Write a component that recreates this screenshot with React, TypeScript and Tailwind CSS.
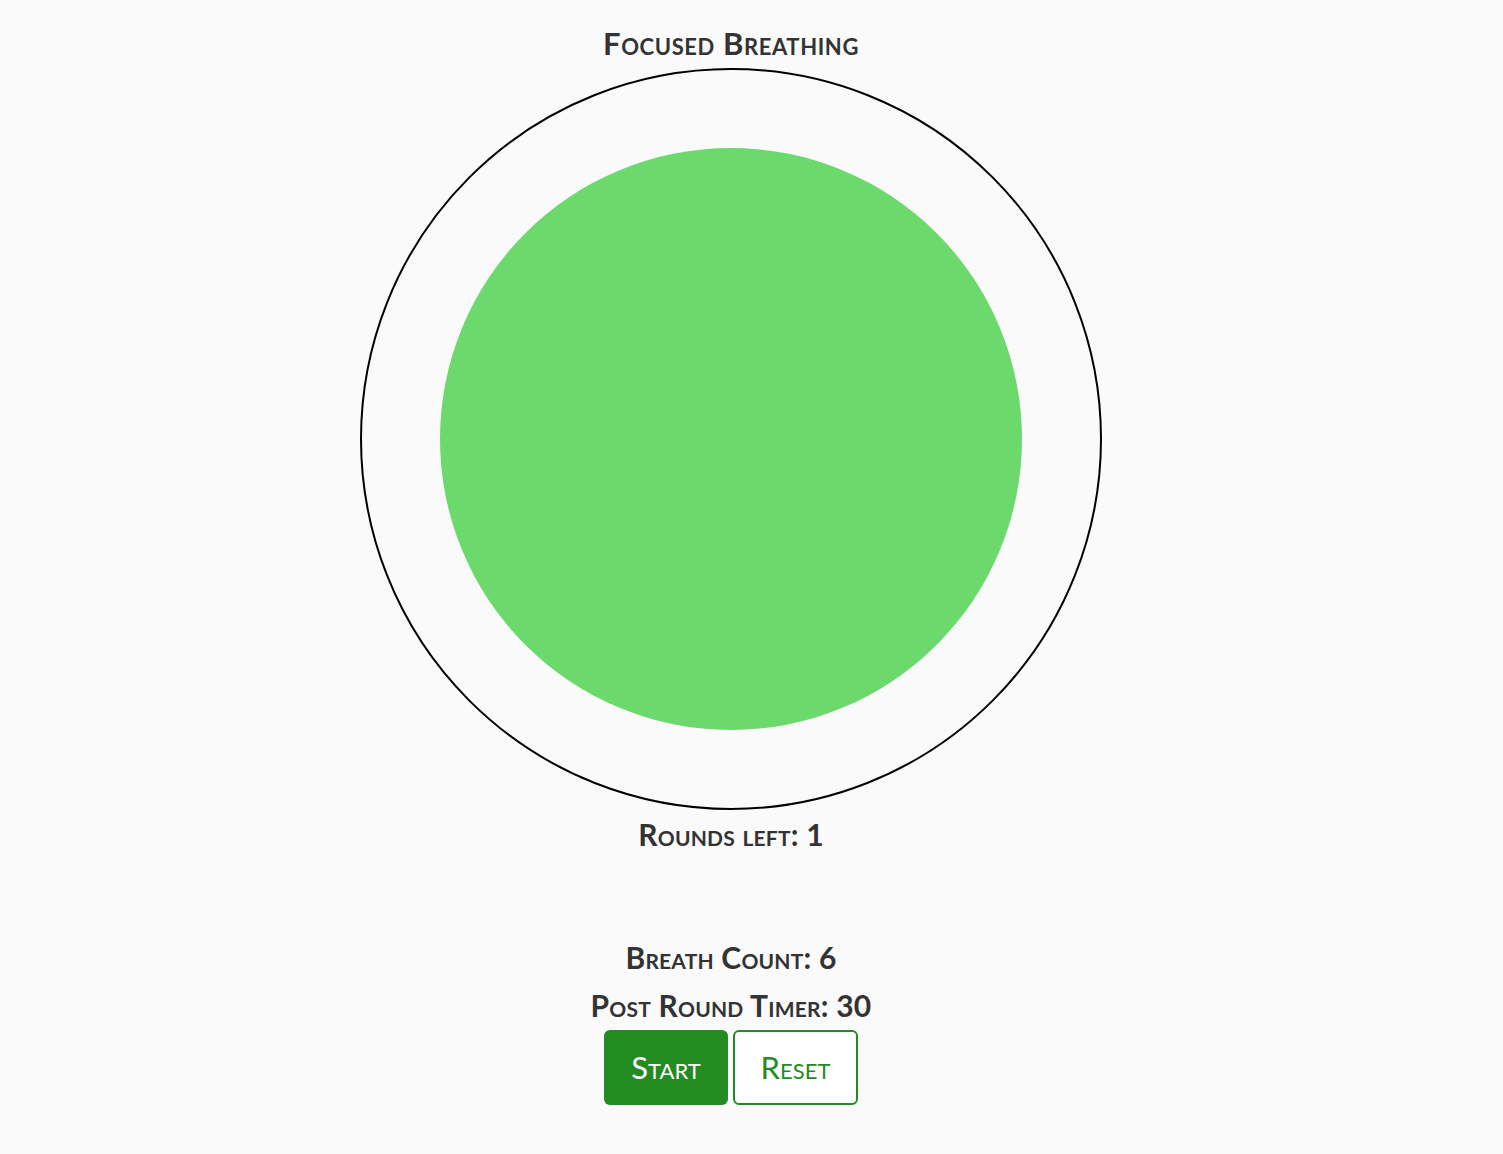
export default function App() {
  const caps = "[font-variant-caps:small-caps] [font-family:Lato,'Open_Sans',sans-serif]"

  return (
    <div className="min-h-[1154px] w-full bg-[#fafafa] pr-[41px] text-[#333333]">
      <div className="flex flex-col items-center">
        <h1 className={`${caps} mt-[25px] text-[31px] font-bold leading-[36px] tracking-[0.6px]`}>
          Focused Breathing
        </h1>

        {/* breathing circle */}
        <div className="mt-[7px] flex h-[742px] w-[742px] items-center justify-center rounded-full border-2 border-black">
          <div className="h-[582px] w-[582px] rounded-full bg-[#6cd96c]" />
        </div>

        <p className={`${caps} mt-[6px] text-[30px] font-bold leading-[36px] tracking-[0.2px]`}>
          Rounds left: 1
        </p>

        <p className={`${caps} mt-[87px] text-[30px] font-bold leading-[36px] tracking-[0.2px]`}>
          Breath Count: 6
        </p>
        <p className={`${caps} mt-[12px] text-[30px] font-bold leading-[36px] tracking-[0.2px]`}>
          Post Round Timer: 30
        </p>

        <div className="mt-[7px] flex gap-[5px]">
          <button
            className={`${caps} h-[75px] w-[124px] rounded-md bg-[#228b22] pb-[1px] text-[31px] text-white`}
          >
            Start
          </button>
          <button
            className={`${caps} h-[75px] w-[125px] rounded-md border-2 border-[#228b22] bg-white pb-[1px] text-[31px] text-[#228b22]`}
          >
            Reset
          </button>
        </div>
      </div>
    </div>
  )
}
